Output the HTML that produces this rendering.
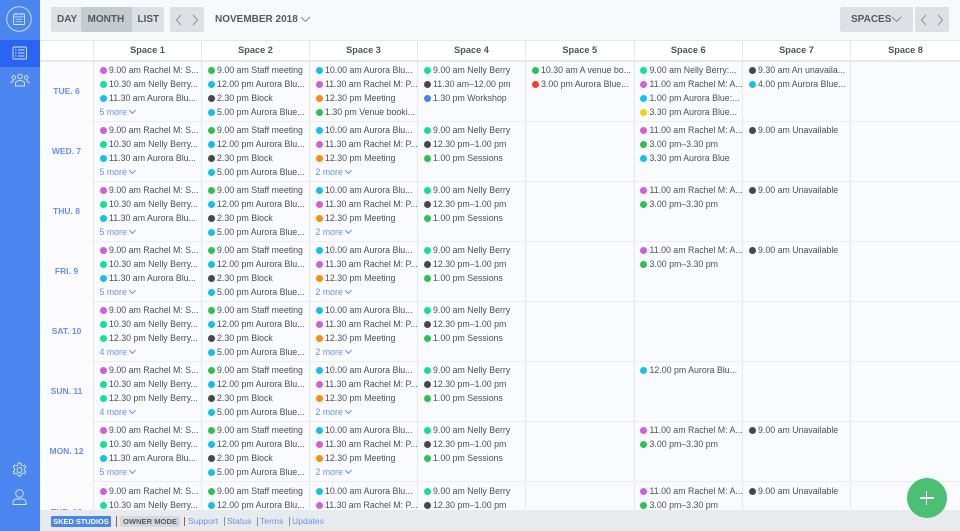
<!DOCTYPE html>
<html><head><meta charset="utf-8"><style>
*{box-sizing:border-box;margin:0;padding:0}
html,body{width:960px;height:531px;overflow:hidden;background:#f8f9fd}
#app{position:relative;width:960px;height:531px;overflow:hidden;background:#f8f9fd;font-family:"Liberation Sans",sans-serif;color:#4c5056}
#side{position:absolute;left:0;top:0;width:40px;height:531px;background:#4a85f0;z-index:5}
#act{position:absolute;left:0;top:40px;width:40px;height:27px;background:#2b63f2}
#side svg{position:absolute;fill:none;stroke:#dfe9ff;stroke-width:.9}
.btn{position:absolute;top:7px;height:25px;background:#dde1e5;border-radius:2px}
.t{position:absolute;top:7px;height:25px;line-height:25px;font-size:10px;font-weight:bold;color:#555a60;white-space:nowrap}
svg.i{position:absolute;fill:none;stroke:#7d8288;stroke-width:.9}
#head{position:absolute;left:40px;top:40px;width:920px;height:22px;background:#fff;border-top:1px solid #e6e8ef;border-bottom:2px solid #e6e8f0}
.g{display:grid;grid-template-columns:54px 108px 108px 108px 108px 108.5px 108.5px 108px 1fr}
#head div{border-right:1px solid #e6e8ef;text-align:center;font-size:9.2px;font-weight:bold;line-height:19px;color:#50555b}
#head div:last-child{border-right:0}
.r{position:absolute;left:40px;width:920px;height:60px;background:#fafbff;border-bottom:1.5px solid #eceef3}
.r>div{border-right:1px solid #e6e8ef;height:60px;padding:1px 0 0 5.5px;overflow:hidden}
.r>div:first-child{background:#fcfcff;padding:0;text-align:center;color:#6590ef;font-weight:bold;font-size:8.5px;line-height:59px}
.r>div:last-child{border-right:0}
p{position:relative;height:14px;line-height:14px;font-size:8.8px;padding-left:9.5px;white-space:nowrap}
p:before{content:"";position:absolute;left:0;top:3.5px;width:7px;height:7px;border-radius:50%;background:var(--c)}
.a{--c:#d05fdc}.b{--c:#12e391}.c{--c:#12c1ec}.d{--c:#2bc24f}.e{--c:#484848}.f{--c:#ff8c0a}.h{--c:#4a7ff0}.j{--c:#ff3b30}.k{--c:#f5d30a}
p.m{color:#6d90ea;padding-left:0}
p.m:before{display:none}
p.m:after{content:"";display:inline-block;width:3.8px;height:3.8px;border-right:.7px solid #6d90ea;border-bottom:.7px solid #6d90ea;transform:rotate(45deg);margin:0 0 2px 3px}
#foot{position:absolute;left:40px;top:510px;width:920px;height:21px;background:#e8ebee;z-index:3;font-size:8.6px}
#foot span{position:absolute;top:6px;height:11px;line-height:11px;white-space:nowrap;color:#6d90ea}
#fab{position:absolute;left:906.5px;top:478px;width:40px;height:40px;border-radius:50%;background:#4bbf73;z-index:6}
#fab:before{content:"";position:absolute;left:13px;top:19.2px;width:14px;height:1.6px;background:#fff}
#fab:after{content:"";position:absolute;left:19.2px;top:13px;width:1.6px;height:14px;background:#fff}
</style></head><body><div id="app">
<div id="side"><div id="act"></div>
<svg style="left:6px;top:6px" width="28" height="28" viewBox="0 0 28 28"><circle cx="13" cy="13" r="12.3"/><rect x="7.500" y="8" width="11" height="10.500" rx="1"/><path d="M7.500 10.800h11M10 6.800v2.500M16 6.800v2.500M9.500 13.200h7M9.500 15.700h7" stroke-opacity=".8"/></svg>
<svg style="left:12px;top:46px" width="16" height="14" viewBox="0 0 16 14"><rect x="1" y="1" width="13.500" height="12" rx="1"/><path d="M3 4h1.500M3 7h1.500M3 10h1.500M6 4h6.500M6 7h6.500M6 10h6.500"/></svg>
<svg style="left:10px;top:73px" width="20" height="16" viewBox="0 0 20 16"><circle cx="10" cy="3.500" r="2.300"/><circle cx="3.800" cy="4.500" r="1.800"/><circle cx="16.200" cy="4.500" r="1.800"/><path d="M5.500 13v-2.500c0-2 2-3 4.500-3s4.500 1 4.500 3V13zM1 10.500c0-1.500 1-2.500 3-2.500M19 10.500c0-1.500-1-2.500-3-2.500"/></svg>
<svg style="left:11px;top:461px" width="18" height="18" viewBox="0 0 18 18"><circle cx="8.500" cy="9" r="2.500"/><path d="M7.300 2h2.400l.4 2 1.700.9 1.900-.8 1.200 2.100-1.500 1.300v2l1.500 1.300-1.200 2.100-1.900-.8-1.700.9-.4 2H7.300l-.4-2-1.700-.9-1.900.8-1.200-2.100 1.500-1.300v-2L2.100 6.200l1.200-2.100 1.900.8 1.700-.9z"/></svg>
<svg style="left:11px;top:488px" width="18" height="18" viewBox="0 0 18 18"><circle cx="8.500" cy="5.500" r="3.800"/><path d="M2 16.500v-2c0-2.200 2-3.500 3.500-3.500h6c1.500 0 3.500 1.300 3.500 3.500v2z"/></svg>
</div>
<div class="btn" style="left:51px;width:113px"></div>
<div class="btn" style="left:81px;width:51px;background:#c4cbd1"></div>
<div class="t" style="left:57px">DAY</div><div class="t" style="left:87.500px">MONTH</div><div class="t" style="left:137.500px">LIST</div>
<div class="btn" style="left:170px;width:34px"></div>
<svg class="i" style="left:175px;top:14px" width="8" height="12" viewBox="0 0 8 12"><path d="M6 1L1.500 6 6 11"/></svg>
<svg class="i" style="left:191px;top:14px" width="8" height="12" viewBox="0 0 8 12"><path d="M2 1l4.500 5L2 11"/></svg>
<div class="t" style="left:215px">NOVEMBER 2018</div>
<svg class="i" style="left:300px;top:16px" width="11" height="7" viewBox="0 0 11 7"><path d="M1 1l4.500 4.500L10 1"/></svg>
<div class="btn" style="left:840px;width:73px"></div>
<div class="t" style="left:851px">SPACES</div>
<svg class="i" style="left:891px;top:16px" width="11" height="7" viewBox="0 0 11 7"><path d="M1 1l4.500 4.500L10 1"/></svg>
<div class="btn" style="left:915px;width:34px"></div>
<svg class="i" style="left:920px;top:14px" width="8" height="12" viewBox="0 0 8 12"><path d="M6 1L1.500 6 6 11"/></svg>
<svg class="i" style="left:936px;top:14px" width="8" height="12" viewBox="0 0 8 12"><path d="M2 1l4.500 5L2 11"/></svg>

<div id="head" class="g"><div></div><div>Space 1</div><div>Space 2</div><div>Space 3</div><div>Space 4</div><div>Space 5</div><div>Space 6</div><div>Space 7</div><div>Space 8</div></div>

<div class="r g" style="top:62px"><div>TUE. 6</div>
<div><p class="a">9.00 am Rachel M: S...</p><p class="b">10.30 am Nelly Berry...</p><p class="c">11.30 am Aurora Blu...</p><p class="m">5 more</p></div>
<div><p class="d">9.00 am Staff meeting</p><p class="c">12.00 pm Aurora Blu...</p><p class="e">2.30 pm Block</p><p class="c">5.00 pm Aurora Blue...</p></div>
<div><p class="c">10.00 am Aurora Blu...</p><p class="a">11.30 am Rachel M: P...</p><p class="f">12.30 pm Meeting</p><p class="d">1.30 pm Venue booki...</p></div>
<div><p class="b">9.00 am Nelly Berry</p><p class="e">11.30 am–12.00 pm</p><p class="h">1.30 pm Workshop</p></div>
<div><p class="d">10.30 am A venue bo...</p><p class="j">3.00 pm Aurora Blue...</p></div>
<div><p class="b">9.00 am Nelly Berry:...</p><p class="a">11.00 am Rachel M: A...</p><p class="c">1.00 pm Aurora Blue:...</p><p class="k">3.30 pm Aurora Blue...</p></div>
<div><p class="e">9.30 am An unavaila...</p><p class="c">4.00 pm Aurora Blue...</p></div><div></div></div>

<div class="r g" style="top:122px"><div>WED. 7</div>
<div><p class="a">9.00 am Rachel M: S...</p><p class="b">10.30 am Nelly Berry...</p><p class="c">11.30 am Aurora Blu...</p><p class="m">5 more</p></div>
<div><p class="d">9.00 am Staff meeting</p><p class="c">12.00 pm Aurora Blu...</p><p class="e">2.30 pm Block</p><p class="c">5.00 pm Aurora Blue...</p></div>
<div><p class="c">10.00 am Aurora Blu...</p><p class="a">11.30 am Rachel M: P...</p><p class="f">12.30 pm Meeting</p><p class="m">2 more</p></div>
<div><p class="b">9.00 am Nelly Berry</p><p class="e">12.30 pm–1.00 pm</p><p class="d">1.00 pm Sessions</p></div>
<div></div>
<div><p class="a">11.00 am Rachel M: A...</p><p class="d">3.00 pm–3.30 pm</p><p class="c">3.30 pm Aurora Blue</p></div>
<div><p class="e">9.00 am Unavailable</p></div><div></div></div>

<div class="r g" style="top:182px"><div>THU. 8</div>
<div><p class="a">9.00 am Rachel M: S...</p><p class="b">10.30 am Nelly Berry...</p><p class="c">11.30 am Aurora Blu...</p><p class="m">5 more</p></div>
<div><p class="d">9.00 am Staff meeting</p><p class="c">12.00 pm Aurora Blu...</p><p class="e">2.30 pm Block</p><p class="c">5.00 pm Aurora Blue...</p></div>
<div><p class="c">10.00 am Aurora Blu...</p><p class="a">11.30 am Rachel M: P...</p><p class="f">12.30 pm Meeting</p><p class="m">2 more</p></div>
<div><p class="b">9.00 am Nelly Berry</p><p class="e">12.30 pm–1.00 pm</p><p class="d">1.00 pm Sessions</p></div>
<div></div>
<div><p class="a">11.00 am Rachel M: A...</p><p class="d">3.00 pm–3.30 pm</p></div>
<div><p class="e">9.00 am Unavailable</p></div><div></div></div>

<div class="r g" style="top:242px"><div>FRI. 9</div>
<div><p class="a">9.00 am Rachel M: S...</p><p class="b">10.30 am Nelly Berry...</p><p class="c">11.30 am Aurora Blu...</p><p class="m">5 more</p></div>
<div><p class="d">9.00 am Staff meeting</p><p class="c">12.00 pm Aurora Blu...</p><p class="e">2.30 pm Block</p><p class="c">5.00 pm Aurora Blue...</p></div>
<div><p class="c">10.00 am Aurora Blu...</p><p class="a">11.30 am Rachel M: P...</p><p class="f">12.30 pm Meeting</p><p class="m">2 more</p></div>
<div><p class="b">9.00 am Nelly Berry</p><p class="e">12.30 pm–1.00 pm</p><p class="d">1.00 pm Sessions</p></div>
<div></div>
<div><p class="a">11.00 am Rachel M: A...</p><p class="d">3.00 pm–3.30 pm</p></div>
<div><p class="e">9.00 am Unavailable</p></div><div></div></div>

<div class="r g" style="top:302px"><div>SAT. 10</div>
<div><p class="a">9.00 am Rachel M: S...</p><p class="b">10.30 am Nelly Berry...</p><p class="b">12.30 pm Nelly Berry...</p><p class="m">4 more</p></div>
<div><p class="d">9.00 am Staff meeting</p><p class="c">12.00 pm Aurora Blu...</p><p class="e">2.30 pm Block</p><p class="c">5.00 pm Aurora Blue...</p></div>
<div><p class="c">10.00 am Aurora Blu...</p><p class="a">11.30 am Rachel M: P...</p><p class="f">12.30 pm Meeting</p><p class="m">2 more</p></div>
<div><p class="b">9.00 am Nelly Berry</p><p class="e">12.30 pm–1.00 pm</p><p class="d">1.00 pm Sessions</p></div>
<div></div><div></div><div></div><div></div></div>

<div class="r g" style="top:362px"><div>SUN. 11</div>
<div><p class="a">9.00 am Rachel M: S...</p><p class="b">10.30 am Nelly Berry...</p><p class="b">12.30 pm Nelly Berry...</p><p class="m">4 more</p></div>
<div><p class="d">9.00 am Staff meeting</p><p class="c">12.00 pm Aurora Blu...</p><p class="e">2.30 pm Block</p><p class="c">5.00 pm Aurora Blue...</p></div>
<div><p class="c">10.00 am Aurora Blu...</p><p class="a">11.30 am Rachel M: P...</p><p class="f">12.30 pm Meeting</p><p class="m">2 more</p></div>
<div><p class="b">9.00 am Nelly Berry</p><p class="e">12.30 pm–1.00 pm</p><p class="d">1.00 pm Sessions</p></div>
<div></div>
<div><p class="c">12.00 pm Aurora Blu...</p></div><div></div><div></div></div>

<div class="r g" style="top:422px"><div>MON. 12</div>
<div><p class="a">9.00 am Rachel M: S...</p><p class="b">10.30 am Nelly Berry...</p><p class="c">11.30 am Aurora Blu...</p><p class="m">5 more</p></div>
<div><p class="d">9.00 am Staff meeting</p><p class="c">12.00 pm Aurora Blu...</p><p class="e">2.30 pm Block</p><p class="c">5.00 pm Aurora Blue...</p></div>
<div><p class="c">10.00 am Aurora Blu...</p><p class="a">11.30 am Rachel M: P...</p><p class="f">12.30 pm Meeting</p><p class="m">2 more</p></div>
<div><p class="b">9.00 am Nelly Berry</p><p class="e">12.30 pm–1.00 pm</p><p class="d">1.00 pm Sessions</p></div>
<div></div>
<div><p class="a">11.00 am Rachel M: A...</p><p class="d">3.00 pm–3.30 pm</p></div>
<div><p class="e">9.00 am Unavailable</p></div><div></div></div>

<div class="r g" style="top:483px"><div>TUE. 13</div>
<div><p class="a">9.00 am Rachel M: S...</p><p class="b">10.30 am Nelly Berry...</p></div>
<div><p class="d">9.00 am Staff meeting</p><p class="c">12.00 pm Aurora Blu...</p></div>
<div><p class="c">10.00 am Aurora Blu...</p><p class="a">11.30 am Rachel M: P...</p></div>
<div><p class="b">9.00 am Nelly Berry</p><p class="e">12.30 pm–1.00 pm</p></div>
<div></div>
<div><p class="a">11.00 am Rachel M: A...</p><p class="d">3.00 pm–3.30 pm</p></div>
<div><p class="e">9.00 am Unavailable</p></div><div></div></div>

<div id="foot">
<span style="left:11px;width:60px;background:#4a85f0;color:#fff;font-weight:bold;text-align:center;font-size:7.4px;border-radius:1px">SKED STUDIOS</span>
<span style="left:76px;width:1px;background:#a0584f"></span>
<span style="left:80px;width:60px;background:#d5d9dd;color:#555a60;font-weight:bold;text-align:center;font-size:7.6px;border-radius:1px">OWNER MODE</span>
<span style="left:144px;width:1px;top:7px;height:9px;background:#a0584f"></span>
<span style="left:148px">Support</span>
<span style="left:187px">Status</span>
<span style="left:220px">Terms</span>
<span style="left:252px">Updates</span>
<span style="left:184px;top:7px;height:9px;width:1px;background:#8a93a5"></span>
<span style="left:217px;top:7px;height:9px;width:1px;background:#8a93a5"></span>
<span style="left:249px;top:7px;height:9px;width:1px;background:#8a93a5"></span>
</div>
<div id="fab"></div>
</div></body></html>
